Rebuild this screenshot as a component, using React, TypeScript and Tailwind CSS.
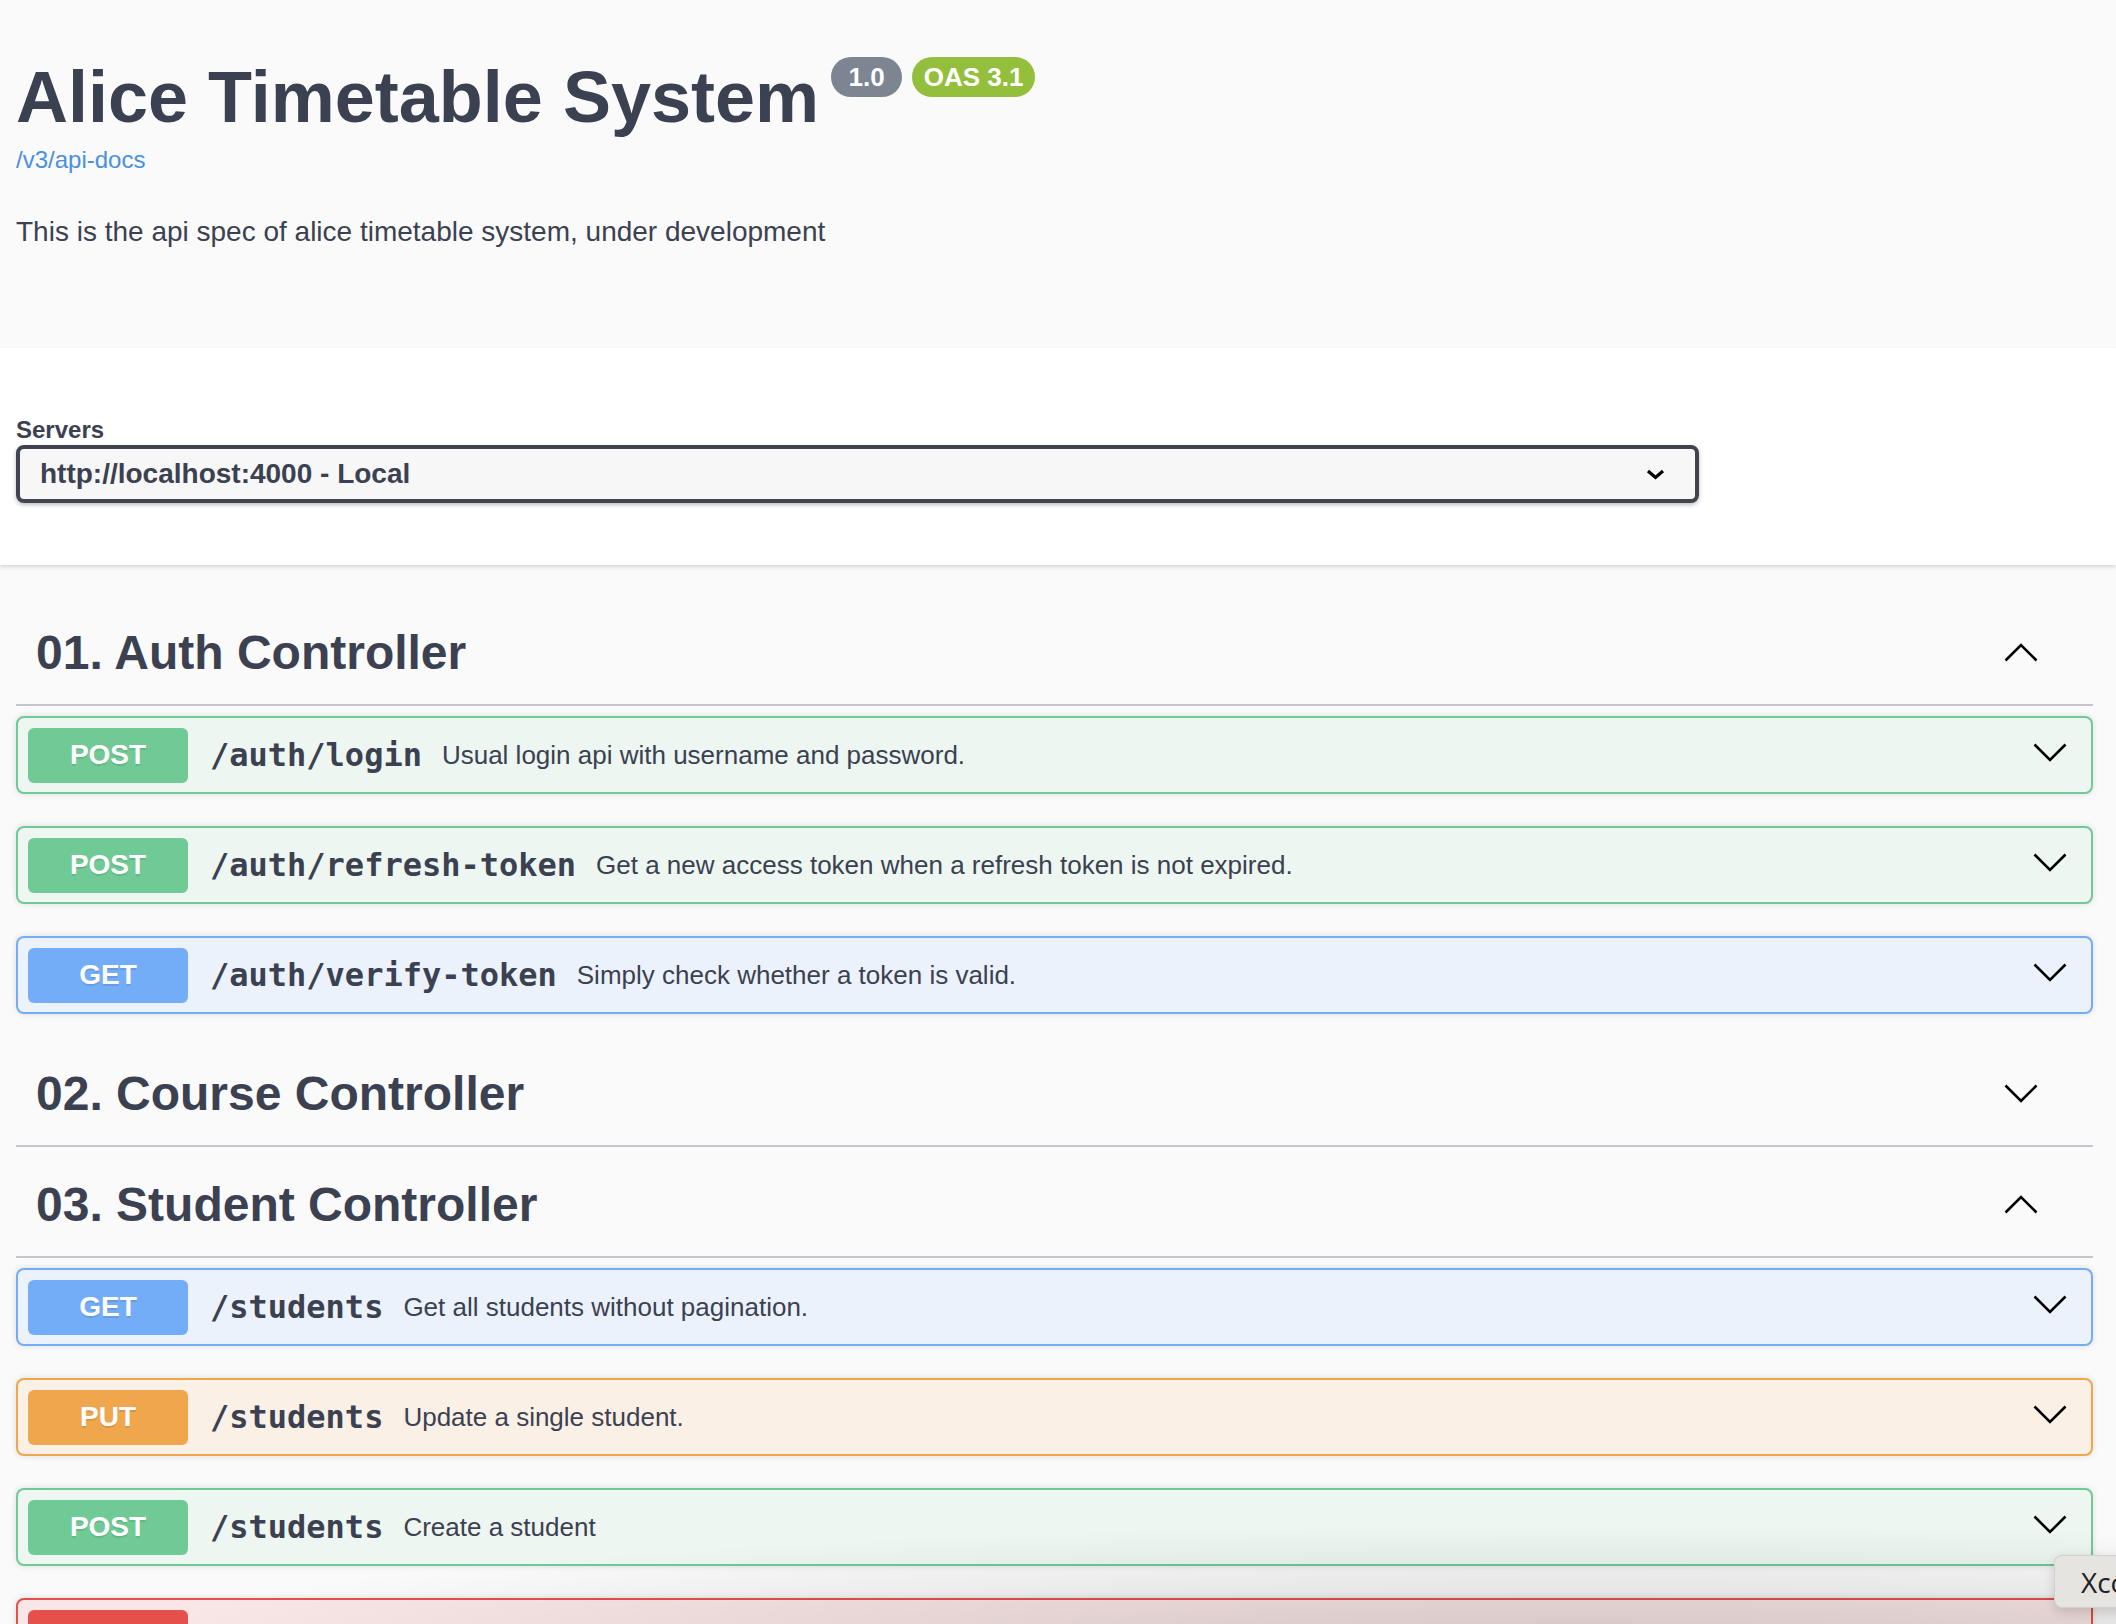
import React from 'react';

type Method = 'GET' | 'POST' | 'PUT' | 'DELETE';

interface Operation {
  method: Method;
  path: string;
  summary: string;
}

interface Tag {
  name: string;
  open: boolean;
  operations: Operation[];
}

const methodStyles: Record<Method, { card: string; badge: string }> = {
  GET: { card: 'border-[#74adf7] bg-[#ebf2fb]', badge: 'bg-[#74adf7]' },
  POST: { card: 'border-[#6fca95] bg-[#edf6f0]', badge: 'bg-[#6fca95]' },
  PUT: { card: 'border-[#efa64c] bg-[#fbf0e6]', badge: 'bg-[#efa64c]' },
  DELETE: { card: 'border-[#e5504a] bg-[#f9e6e6]', badge: 'bg-[#e5504a]' },
};

const tags: Tag[] = [
  {
    name: '01. Auth Controller',
    open: true,
    operations: [
      { method: 'POST', path: '/auth/login', summary: 'Usual login api with username and password.' },
      { method: 'POST', path: '/auth/refresh-token', summary: 'Get a new access token when a refresh token is not expired.' },
      { method: 'GET', path: '/auth/verify-token', summary: 'Simply check whether a token is valid.' },
    ],
  },
  { name: '02. Course Controller', open: false, operations: [] },
  {
    name: '03. Student Controller',
    open: true,
    operations: [
      { method: 'GET', path: '/students', summary: 'Get all students without pagination.' },
      { method: 'PUT', path: '/students', summary: 'Update a single student.' },
      { method: 'POST', path: '/students', summary: 'Create a student' },
      // last row is only peeking in at the bottom of the window, its labels are below the fold
      { method: 'DELETE', path: '', summary: '' },
    ],
  },
];

const Chevron: React.FC<{ up?: boolean }> = ({ up }) => (
  <svg width="34" height="19" viewBox="0 0 34 19" className="shrink-0">
    <polyline
      points={up ? '1.5,17.5 17,2 32.5,17.5' : '1.5,1.5 17,17 32.5,1.5'}
      fill="none"
      stroke="#000"
      strokeWidth="2.6"
    />
  </svg>
);

const OperationRow: React.FC<{ op: Operation }> = ({ op }) => {
  const s = methodStyles[op.method];
  const hidden = !op.path;
  return (
    <div className={`mb-[32px] flex h-[78px] items-center rounded-[8px] border-2 pl-[10px] pr-[24px] shadow-[0_0_6px_rgba(0,0,0,0.12)] ${s.card}`}>
      <span className={`flex h-[55px] w-[160px] shrink-0 items-center justify-center rounded-[6px] text-[28px] font-bold text-white [text-shadow:0_2px_0_rgba(0,0,0,0.1)] ${s.badge}`}>
        {hidden ? null : op.method}
      </span>
      {!hidden && (
        <>
          <span className="ml-[22px] font-['DejaVu_Sans_Mono',monospace] text-[32px] font-bold text-[#3b4151]">
            {op.path}
          </span>
          <span className="ml-[20px] flex-1 text-[26px] text-[#3b4151]">{op.summary}</span>
          <div className="-mt-[6px]">
            <Chevron />
          </div>
        </>
      )}
    </div>
  );
};

const TagSection: React.FC<{ tag: Tag }> = ({ tag }) => (
  <section>
    <div className="mb-[10px] flex items-center border-b-2 border-[#c4c5ca] pb-[24px] pl-[20px] pr-[55px] pt-[20px]">
      <h3 className="flex-1 text-[48px] font-bold leading-[55px] text-[#3b4151]">{tag.name}</h3>
      <Chevron up={tag.open} />
    </div>
    {tag.open && tag.operations.map((op, i) => <OperationRow key={i} op={op} />)}
  </section>
);

export default function App() {
  return (
    <div className="relative h-[1624px] overflow-hidden bg-[#fafafa] font-['Liberation_Sans',Arial,sans-serif] text-[#3b4151]">
      <header className="h-[348px] bg-[#fafafa] px-4 pt-[56px]">
        <div className="flex items-start">
          <h2 className="text-[72px] font-bold leading-[83px] text-[#3b4151]">Alice Timetable System</h2>
          <div className="ml-[12px] mt-[1px] flex gap-[10px]">
            <span className="flex h-[40px] w-[71px] items-center justify-center rounded-full bg-[#7d8492] text-[26px] font-bold text-white">
              1.0
            </span>
            <span className="flex h-[40px] w-[123px] items-center justify-center rounded-full bg-[#93bf3d] text-[26px] font-bold text-white">
              OAS 3.1
            </span>
          </div>
        </div>
        <a className="mt-[7px] block w-fit text-[24px] leading-[28px] text-[#4990e2]">/v3/api-docs</a>
        <p className="mt-[42px] text-[28px] leading-[32px] text-[#3b4151]">
          This is the api spec of alice timetable system, under development
        </p>
      </header>

      <div className="relative bg-white pb-[62px] pl-4 pt-[68px] shadow-[0_2px_4px_rgba(0,0,0,0.15)]">
        <div className="text-[24px] font-bold leading-[28px] text-[#3b4151]">Servers</div>
        <div className="mt-[1px] flex h-[58px] w-[1683px] items-center rounded-[8px] border-4 border-[#41444e] bg-[#f7f7f7] pl-[20px] pr-[30px] shadow-[0_2px_4px_rgba(0,0,0,0.25)]">
          <span className="flex-1 text-[28px] font-bold text-[#3b4151]">http://localhost:4000 - Local</span>
          <svg width="19" height="11" viewBox="0 0 19 11">
            <polyline points="2,2 9.5,8.5 17,2" fill="none" stroke="#000" strokeWidth="3.2" />
          </svg>
        </div>
      </div>

      <main className="pl-4 pr-[23px] pt-[40px]">
        {tags.map((tag) => (
          <TagSection key={tag.name} tag={tag} />
        ))}
      </main>

      <div className="pointer-events-none absolute bottom-0 left-0 h-[110px] w-full bg-[radial-gradient(ellipse_at_75%_115%,rgba(0,0,0,0.14),rgba(0,0,0,0)_65%)]" />

      <div className="absolute left-[2054px] top-[1555px] flex h-[53px] w-[120px] items-center rounded-[8px] border border-[#d2d0cd] bg-[#e6e4e1] pl-[26px] font-['Open_Sans',sans-serif] text-[28px] text-[#222] shadow-[0_4px_12px_rgba(0,0,0,0.15)]">
        Xcode
      </div>
    </div>
  );
}
